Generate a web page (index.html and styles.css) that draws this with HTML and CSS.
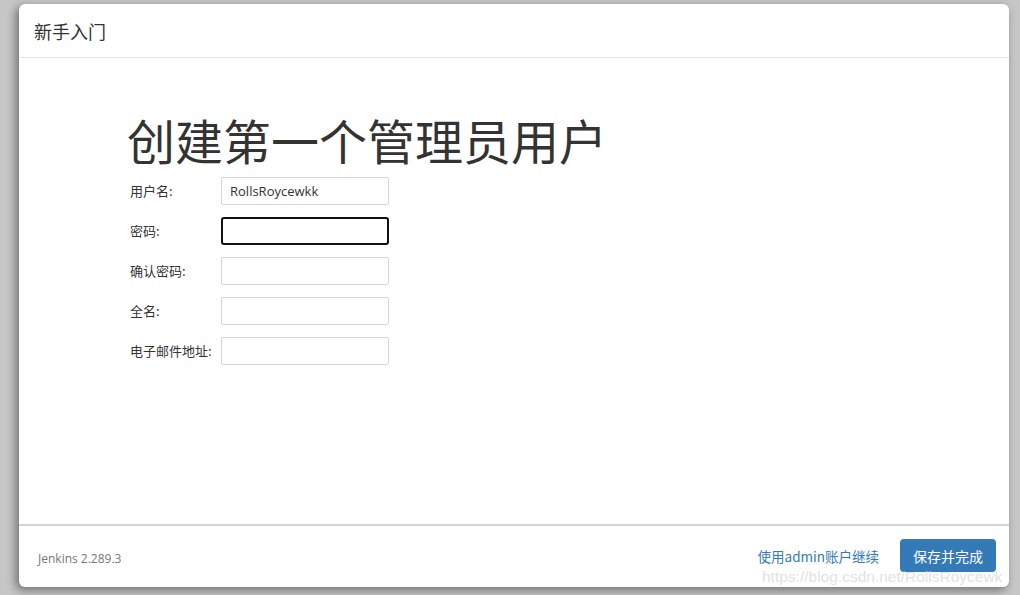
FILE: index.html
```html
<!DOCTYPE html>
<html>
<head>
    <meta charset="utf-8">
    <title>新手入门</title>
    <link rel="stylesheet" href="styles.css">
</head>

<body>

    <div class="modal">
        <div class="modal-header">新手入门</div>

        <div class="modal-body">
            <h1>创建第一个管理员用户</h1>

            <form class="user-form">
                <div class="form-row">
                    <label>用户名:</label>
                    <input type="text" value="RollsRoycewkk">
                </div>
                <div class="form-row">
                    <label>密码:</label>
                    <input type="password" class="focused">
                </div>
                <div class="form-row">
                    <label>确认密码:</label>
                    <input type="password">
                </div>
                <div class="form-row">
                    <label>全名:</label>
                    <input type="text">
                </div>
                <div class="form-row">
                    <label>电子邮件地址:</label>
                    <input type="text">
                </div>
            </form>
        </div>

        <div class="modal-footer">
            <span class="version">Jenkins 2.289.3</span>
            <div class="actions">
                <a href="#" class="skip-link">使用admin账户继续</a>
                <button class="save-button">保存并完成</button>
            </div>
        </div>

        <!-- csdn watermark -->
        <div class="watermark">https://blog.csdn.net/RollsRoycewk</div>
    </div>

</body>
</html>
```

FILE: styles.css
```css
body {
    background-color: #c6c6c6;
    font-family: "Open Sans", "Noto Sans CJK SC", sans-serif;
    color: #333;
    margin: 0;
    padding: 4px 11px 8px 19px;
}

.modal {
    position: relative;
    overflow: hidden;
    height: 583px;
    background-color: #fff;
    border-radius: 6px;
    box-shadow: -3px 3px 10px rgba(0, 0, 0, 0.45);
    display: flex;
    flex-direction: column;
}

.modal-header {
    height: 54px;
    box-sizing: border-box;
    padding: 0 15px;
    display: flex;
    align-items: center;
    font-size: 18px;
    font-family: "Noto Sans CJK SC", sans-serif;
    border-bottom: 1px solid #e5e5e5;
}

.modal-body {
    flex: 1;
    padding: 0 0 0 108px;
}

h1 {
    font-family: "Noto Sans CJK SC", sans-serif;
    font-size: 48px;
    font-weight: normal;
    line-height: 48px;
    margin: 57px 0 0 0;
}

.user-form {
    padding: 14px 0 0 3px;
}

.form-row {
    display: flex;
    align-items: center;
    height: 28px;
    margin-bottom: 12px;
}

.form-row label {
    width: 91px;
    font-size: 13px;
    font-family: "Noto Sans CJK SC", sans-serif;
    margin-top: -2px;
}

.form-row input {
    width: 168px;
    height: 28px;
    box-sizing: border-box;
    border: 1px solid #d6d6d6;
    border-radius: 2px;
    padding: 0 8px;
    font-family: "Open Sans", sans-serif;
    font-size: 13px;
    color: #333;
    outline: none;
}

.form-row input.focused {
    border: 2px solid #111;
    border-radius: 3px;
}

.modal-footer {
    height: 63px;
    box-sizing: border-box;
    border-top: 2px solid #d4d4d4;
    display: flex;
    align-items: center;
    justify-content: space-between;
    padding: 0 13px 0 19px;
}

.version {
    font-size: 12px;
    color: #777;
    margin-top: 4px;
}

.actions {
    display: flex;
    align-items: center;
    gap: 21px;
}

.skip-link {
    color: #337ab7;
    font-size: 13.5px;
    font-family: "Noto Sans CJK SC", sans-serif;
    text-decoration: none;
    margin-top: -2px;
}

.save-button {
    width: 96px;
    height: 33px;
    margin-top: -2px;
    border: none;
    border-radius: 4px;
    background-color: #337ab7;
    color: #fff;
    font-size: 14px;
    font-family: "Noto Sans CJK SC", sans-serif;
    cursor: pointer;
}

.watermark {
    position: absolute;
    left: 743px;
    top: 564px;
    font-family: "Liberation Sans", Arial, sans-serif;
    font-size: 15.5px;
    color: rgba(215, 215, 215, 0.75);
    white-space: nowrap;
    pointer-events: none;
}
```
